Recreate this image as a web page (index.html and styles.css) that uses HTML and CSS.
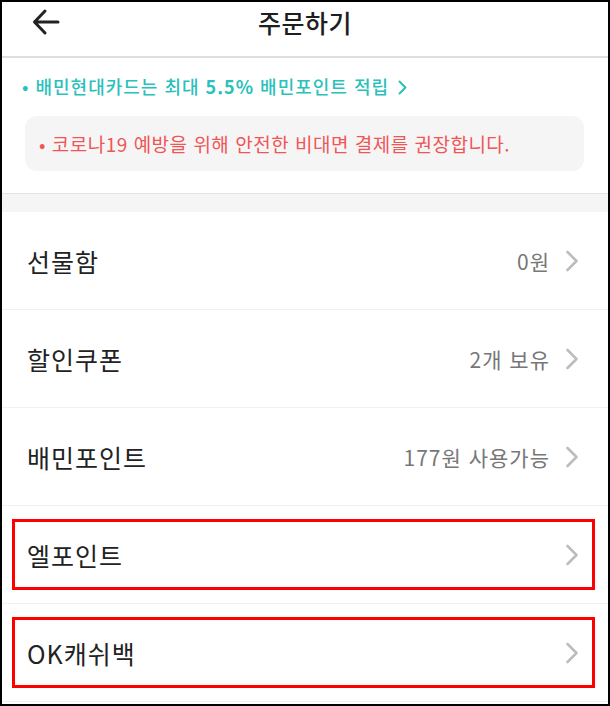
FILE: index.html
```html
<!DOCTYPE html>
<html lang="ko">
<head>
<meta charset="utf-8">
<title>주문하기</title>
<link rel="stylesheet" href="styles.css">
</head>
<body>
<div class="frame">
  <header class="header">
    <div class="back">
      <svg width="30" height="30" viewBox="0 0 30 30"><path d="M27 15H4M14 4L3.5 15L14 26" fill="none" stroke="#222" stroke-width="3" stroke-linecap="round" stroke-linejoin="round"/></svg>
    </div>
    <h1 class="title">주문하기</h1>
    <div></div>
  </header>

  <section class="notice">
    <p class="promo">• 배민현대카드는 최대 <b>5.5%</b> 배민포인트 적립<svg class="promo-chev" width="9" height="15" viewBox="0 0 9 15"><path d="M1.5 1.5L7.5 7.5L1.5 13.5" fill="none" stroke="#2ac1bc" stroke-width="2" stroke-linecap="round" stroke-linejoin="round"/></svg></p>
    <div class="warn">• 코로나19 예방을 위해 안전한 비대면 결제를 권장합니다.</div>
  </section>

  <div class="band"></div>

  <ul class="list">
    <li class="row"><span class="label">선물함</span><span class="value">0원</span><svg class="chev" width="14" height="22" viewBox="0 0 14 22"><path d="M2.5 2L11.5 11L2.5 20" fill="none" stroke="#bdbdbd" stroke-width="2.6" stroke-linecap="round" stroke-linejoin="round"/></svg></li>
    <li class="row"><span class="label">할인쿠폰</span><span class="value">2개 보유</span><svg class="chev" width="14" height="22" viewBox="0 0 14 22"><path d="M2.5 2L11.5 11L2.5 20" fill="none" stroke="#bdbdbd" stroke-width="2.6" stroke-linecap="round" stroke-linejoin="round"/></svg></li>
    <li class="row"><span class="label">배민포인트</span><span class="value">177원 사용가능</span><svg class="chev" width="14" height="22" viewBox="0 0 14 22"><path d="M2.5 2L11.5 11L2.5 20" fill="none" stroke="#bdbdbd" stroke-width="2.6" stroke-linecap="round" stroke-linejoin="round"/></svg></li>
    <li class="row marked"><span class="label">엘포인트</span><span class="value"></span><svg class="chev" width="14" height="22" viewBox="0 0 14 22"><path d="M2.5 2L11.5 11L2.5 20" fill="none" stroke="#bdbdbd" stroke-width="2.6" stroke-linecap="round" stroke-linejoin="round"/></svg><span class="mark"></span></li>
    <li class="row marked"><span class="label">OK캐쉬백</span><span class="value"></span><svg class="chev" width="14" height="22" viewBox="0 0 14 22"><path d="M2.5 2L11.5 11L2.5 20" fill="none" stroke="#bdbdbd" stroke-width="2.6" stroke-linecap="round" stroke-linejoin="round"/></svg><span class="mark"></span></li>
  </ul>
</div>
</body>
</html>
```
FILE: styles.css
```css
* { box-sizing: border-box; }
html, body { margin: 0; padding: 0; background: #fff; }
body { font-family: "Noto Sans CJK KR", "Noto Sans", sans-serif; color: #222; }

.frame {
  width: 610px;
  height: 706px;
  border: 2px solid #000;
  overflow: hidden;
  background: #fff;
}

.header {
  height: 56px;
  border-bottom: 2px solid #dedede;
  display: grid;
  grid-template-columns: 1fr auto 1fr;
  align-items: start;
}
.back { padding: 5px 0 0 29px; line-height: 0; }
.title {
  margin: 0;
  padding-top: 2px;
  font-size: 25px;
  font-weight: 500;
  line-height: 36px;
  letter-spacing: 0.5px;
  color: #1e1e1e;
}

.notice { padding: 15px 24px 22px 23px; }
.promo {
  margin: 0 0 17px -3px;
  height: 26px;
  font-size: 18px;
  line-height: 26px;
  font-weight: 500;
  letter-spacing: 1px;
  color: #2ac1bc;
}
.promo b { font-weight: 700; }
.promo-chev { margin-left: 9px; vertical-align: -1px; }
.warn {
  height: 55px;
  background: #f5f5f5;
  border-radius: 12px;
  padding: 0 0 0 14px;
  display: flex;
  align-items: center;
  font-size: 19px;
  letter-spacing: 0.5px;
  color: #f05656;
}

.band {
  height: 19px;
  border-top: 1px solid #e3e3e3;
  background: #f5f5f5;
}

.list { list-style: none; margin: 0; padding: 0; }
.row {
  position: relative;
  height: 98px;
  border-bottom: 1px solid #f0f0f0;
  display: flex;
  align-items: center;
  padding: 0 29px 0 25px;
}
.label { font-size: 25px; color: #222; flex: 1; letter-spacing: 1px; }
.value { font-size: 21px; color: #777; margin-right: 15px; letter-spacing: 1px; }
.chev { display: block; }

.mark {
  position: absolute;
  top: 13px;
  bottom: 13px;
  left: 10px;
  right: 13px;
  border: 3px solid #ff0000;
}
```
